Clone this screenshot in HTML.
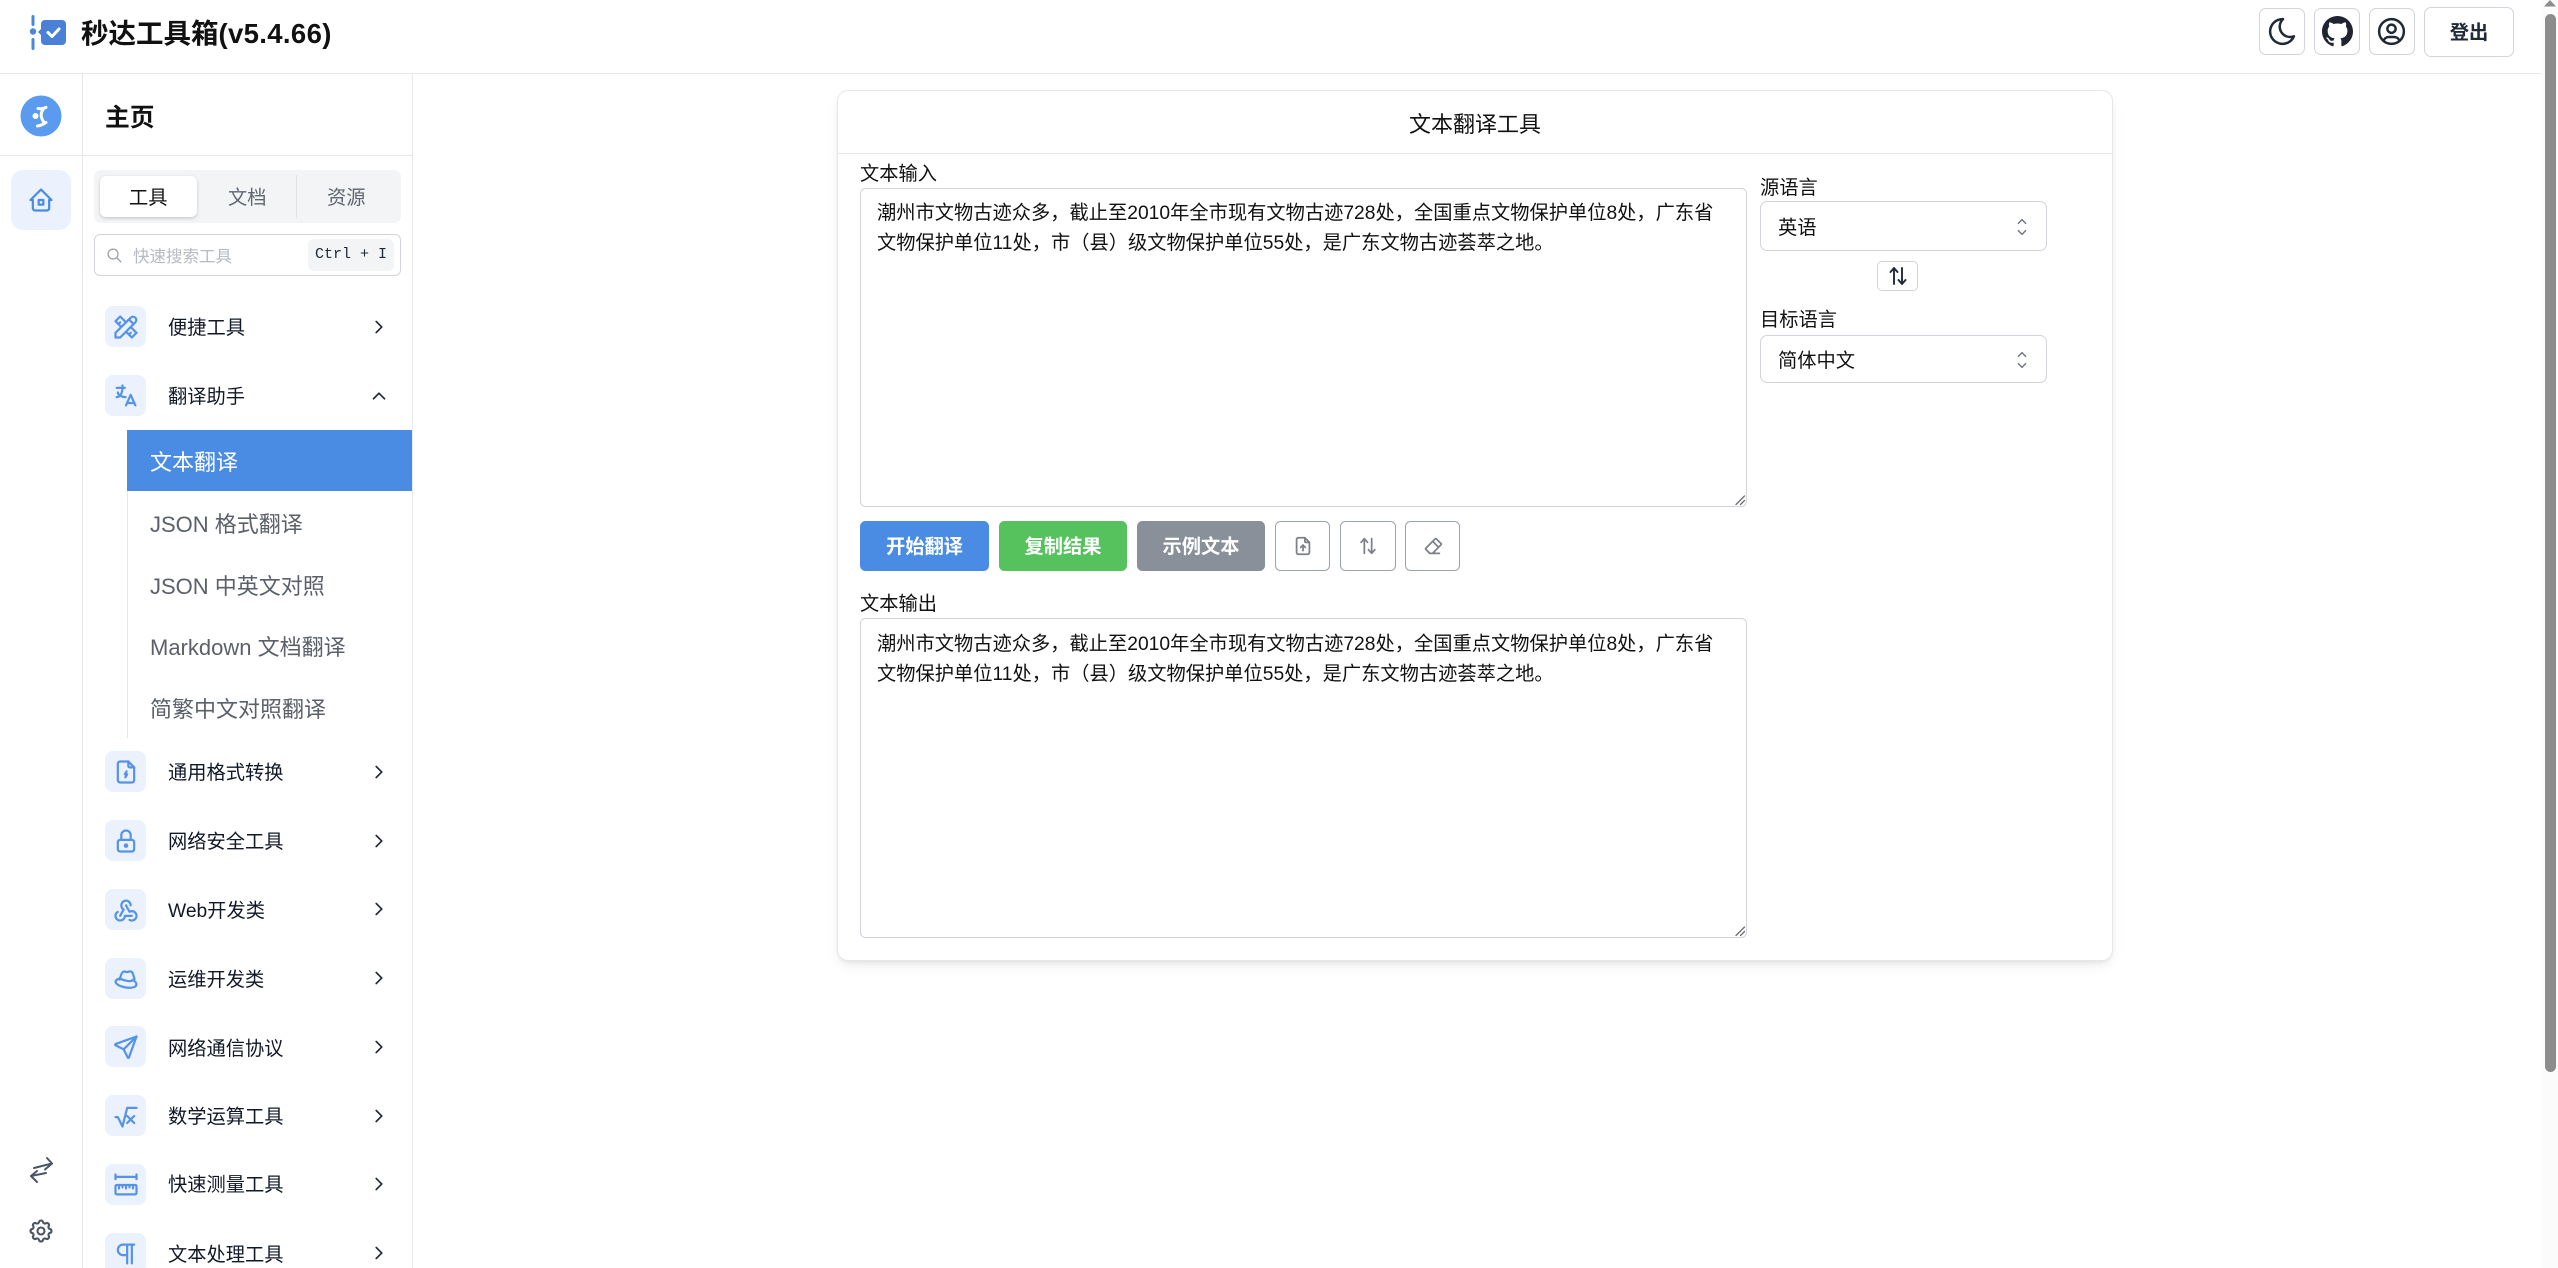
<!DOCTYPE html>
<html lang="zh-CN"><head><meta charset="utf-8"><title>秒达工具箱</title>
<style>
*{box-sizing:border-box;margin:0;padding:0}
html,body{width:2558px;height:1268px;overflow:hidden;background:#fff}
body{position:relative;font-family:"Liberation Sans","Noto Sans CJK SC",sans-serif;color:#111827;font-size:19.25px}
.a{position:absolute}
.t{position:absolute;white-space:pre;line-height:30px;margin-top:2px}
.ln{position:absolute;background:#e5e7eb}
svg{position:absolute;fill:none;stroke-linecap:round;stroke-linejoin:round}
.ic{width:28px;height:28px;stroke:#5693e7;stroke-width:1.9}
.box{position:absolute;left:105px;width:41px;height:41px;background:#ebf2fd;border-radius:8px}
.box svg{left:6.5px;top:6.5px}
.chev{left:368px;width:22px;height:22px;stroke:#1f2937;stroke-width:1.8}
.btn{position:absolute;top:521px;height:50px;border-radius:5.5px;color:#fff;font-weight:700;text-align:center;line-height:53px}
.ob{position:absolute;top:521px;height:50px;border:1.4px solid #9ca3af;border-radius:5.5px;background:#fff}
.ob svg{width:22px;height:22px;stroke:#7b8089;stroke-width:1.9;left:16px;top:13px}
.hb{position:absolute;top:8px;width:46px;height:47px;border:1.4px solid #d1d5db;border-radius:7px;background:#fff}
.hb svg{stroke:#1f2937;stroke-width:1.8;width:33px;height:33px;left:5.5px;top:6px}
.ta{position:absolute;left:860px;width:887px;border:1.4px solid #d1d5db;border-radius:5.5px;background:#fff}
.sel{position:absolute;left:1760px;width:287px;border:1.4px solid #d1d5db;border-radius:7px;background:#fff}
.sub{position:absolute;left:150px;font-size:22px;line-height:30px;color:#5b606a;white-space:pre;margin-top:2px}
</style></head><body>

<!-- header -->
<svg style="left:20px;top:8px;width:60px;height:50px" viewBox="0 0 60 50">
<path d="M13 8.5v8M13 31.5v9" stroke="#4a86dc" stroke-width="3"/>
<circle cx="13" cy="23.5" r="3.2" fill="#4a86dc"/>
<path d="M25 12h17a4 4 0 0 1 4 4v17a4 4 0 0 1-4 4H25a4 4 0 0 1-4-4v-6l-3-3 3-3v-5a4 4 0 0 1 4-4z" fill="#4a80d6"/>
<path d="M28 24.5l4 4 7-7.5" stroke="#fff" stroke-width="3"/>
</svg>
<div class="t" style="left:81px;top:17px;font-size:27.5px;font-weight:700;color:#111">秒达工具箱<span style="letter-spacing:.35px">(v5.4.66)</span></div>

<div class="hb" style="left:2259px"><svg viewBox="0 0 24 24"><path d="M12 3c.132 0 .263 0 .393 0a7.5 7.5 0 0 0 7.92 12.446a9 9 0 1 1 -8.313 -12.454z"/></svg></div>
<div class="hb" style="left:2314px"><svg viewBox="0 0 16 16" style="fill:#1f2430;stroke:none;width:31px;height:31px;left:6.5px;top:7px"><path d="M8 0C3.58 0 0 3.58 0 8c0 3.54 2.29 6.53 5.47 7.59.4.07.55-.17.55-.38 0-.19-.01-.82-.01-1.49-2.01.37-2.53-.49-2.69-.94-.09-.23-.48-.94-.82-1.13-.28-.15-.68-.52-.01-.53.63-.01 1.08.58 1.23.82.72 1.21 1.87.87 2.33.66.07-.52.28-.87.51-1.07-1.78-.2-3.64-.89-3.64-3.95 0-.87.31-1.59.82-2.15-.08-.2-.36-1.02.08-2.12 0 0 .67-.21 2.2.82.64-.18 1.32-.27 2-.27.68 0 1.36.09 2 .27 1.53-1.04 2.2-.82 2.2-.82.44 1.1.16 1.92.08 2.12.51.56.82 1.27.82 2.15 0 3.07-1.87 3.75-3.65 3.95.29.25.54.73.54 1.48 0 1.07-.01 1.93-.01 2.2 0 .21.15.46.55.38A8.013 8.013 0 0016 8c0-4.42-3.58-8-8-8z"/></svg></div>
<div class="hb" style="left:2369px"><svg viewBox="0 0 24 24" style="left:4.5px"><circle cx="12" cy="12" r="9"/><circle cx="12" cy="10" r="3"/><path d="M6.168 18.849a4 4 0 0 1 3.832 -2.849h4a4 4 0 0 1 3.834 2.855"/></svg></div>
<div class="a" style="left:2424px;top:7px;width:90px;height:50px;border:1.4px solid #d1d5db;border-radius:7px;text-align:center;line-height:51px;font-weight:700;color:#1f2937">登出</div>

<div class="ln" style="left:0;top:73px;width:2541px;height:1.4px"></div>
<div class="ln" style="left:82px;top:73px;width:1.4px;height:1195px"></div>
<div class="ln" style="left:412px;top:73px;width:1.4px;height:1195px"></div>
<div class="ln" style="left:0;top:155px;width:412px;height:1.4px"></div>

<!-- rail -->
<svg style="left:20px;top:95px;width:42px;height:42px" viewBox="0 0 42 42">
<circle cx="21" cy="21" r="20.5" fill="#5a9bef"/>
<circle cx="15.500" cy="21" r="3" fill="#fff"/>
<path d="M18 13.500c3 .5 5.500 .2 8-1.200M24 13.500c-2.500 2.500-3 5-2.800 7.500c.2 2.500 1.500 4.500 2.800 6.500M17.500 31c3-.5 6-1.800 8.500-3.500" stroke="#fff" stroke-width="3"/>
</svg>
<div class="a" style="left:11px;top:170px;width:60px;height:60px;background:#ebf2fd;border-radius:12px"></div>
<svg class="ic" style="left:27px;top:186px;stroke:#4a8ce4" viewBox="0 0 24 24"><path d="M5 12l-2 0l9 -9l9 9l-2 0"/><path d="M5 12v7a2 2 0 0 0 2 2h10a2 2 0 0 0 2 -2v-7"/><path d="M10 12h4v4h-4z"/></svg>
<svg style="left:27px;top:1156px;width:28px;height:28px;stroke:#4b5563;stroke-width:2" viewBox="0 0 28 28"><path d="M20 2l5 5.500-7 6"/><path d="M7 12L25 7.500"/><path d="M10 15l-6 5 6 6"/><path d="M4 20l15-3"/></svg>
<svg style="left:27px;top:1217px;width:28px;height:28px;stroke:#4b5563;stroke-width:1.8" viewBox="0 0 24 24"><path d="M10.325 4.317c.426 -1.756 2.924 -1.756 3.35 0a1.724 1.724 0 0 0 2.573 1.066c1.543 -.94 3.31 .826 2.37 2.37a1.724 1.724 0 0 0 1.065 2.572c1.756 .426 1.756 2.924 0 3.35a1.724 1.724 0 0 0 -1.066 2.573c.94 1.543 -.826 3.31 -2.37 2.37a1.724 1.724 0 0 0 -2.572 1.065c-.426 1.756 -2.924 1.756 -3.35 0a1.724 1.724 0 0 0 -2.573 -1.066c-1.543 .94 -3.31 -.826 -2.37 -2.37a1.724 1.724 0 0 0 -1.065 -2.572c-1.756 -.426 -1.756 -2.924 0 -3.35a1.724 1.724 0 0 0 1.066 -2.573c-.94 -1.543 .826 -3.31 2.37 -2.37c1 .608 2.296 .07 2.572 -1.065z"/><circle cx="12" cy="12" r="3"/></svg>

<!-- sidebar head -->
<div class="t" style="left:105px;top:102px;font-size:24.75px;font-weight:700;color:#111">主页</div>
<div class="a" style="left:94px;top:170px;width:307px;height:53px;background:#f3f4f6;border-radius:7px"></div>
<div class="a" style="left:100px;top:176px;width:97px;height:41px;background:#fff;border-radius:6px;box-shadow:0 1.4px 3px rgba(0,0,0,.18)"></div>
<div class="ln" style="left:296px;top:175px;width:1.4px;height:43px;background:#e0e2e6"></div>
<div class="t" style="left:129px;top:182px;color:#111">工具</div>
<div class="t" style="left:228px;top:182px;color:#5f6570">文档</div>
<div class="t" style="left:327px;top:182px;color:#5f6570">资源</div>
<div class="a" style="left:94px;top:234px;width:307px;height:42px;border:1.4px solid #d1d5db;border-radius:6px"></div>
<svg style="left:106px;top:247px;width:17px;height:17px;stroke:#9aa0a8;stroke-width:1.8" viewBox="0 0 24 24"><circle cx="10" cy="10" r="7"/><path d="M21 21l-6 -6"/></svg>
<div class="t" style="left:133px;top:240px;font-size:16.5px;color:#b6bac1">快速搜索工具</div>
<div class="a" style="left:308px;top:239px;width:86px;height:32px;background:#f3f4f6;border-radius:6px"></div>
<div class="t" style="left:315px;top:238px;font-family:'Liberation Mono',monospace;font-size:15px;color:#1f2937">Ctrl + I</div>

<!-- items -->
<div class="box" style="top:306px"><svg class="ic" viewBox="0 0 24 24"><path d="M3 21h4l13 -13a1.5 1.5 0 0 0 -4 -4l-13 13v4"/><path d="M14.5 5.5l4 4"/><path d="M12 8l-5 -5l-4 4l5 5"/><path d="M7 8l-1.5 1.5"/><path d="M16 12l5 5l-4 4l-5 -5"/><path d="M16 17l-1.5 1.5"/></svg></div>
<div class="t" style="left:168px;top:312px">便捷工具</div>
<svg class="chev" style="top:316px" viewBox="0 0 24 24"><path d="M9 6l6 6l-6 6"/></svg>

<div class="box" style="top:375px"><svg class="ic" viewBox="0 0 24 24"><path d="M4 5h7"/><path d="M9 3v2c0 4.418 -2.239 8 -5 8"/><path d="M5 9c0 2.144 2.952 3.908 6.7 4"/><path d="M12 20l4 -9l4 9"/><path d="M19.1 18h-6.2"/></svg></div>
<div class="t" style="left:168px;top:381px">翻译助手</div>
<svg class="chev" style="top:385px" viewBox="0 0 24 24"><path d="M6 15l6 -6l6 6"/></svg>

<div class="ln" style="left:127px;top:430px;width:1.4px;height:308px"></div>
<div class="a" style="left:127px;top:430px;width:285px;height:61px;background:#4a8ce4"></div>
<div class="sub" style="top:446px;color:#fff">文本翻译</div>
<div class="sub" style="top:508px">JSON 格式翻译</div>
<div class="sub" style="top:570px">JSON 中英文对照</div>
<div class="sub" style="top:631px">Markdown 文档翻译</div>
<div class="sub" style="top:693px">简繁中文对照翻译</div>

<div class="box" style="top:751px"><svg class="ic" viewBox="0 0 24 24"><path d="M14 3v4a1 1 0 0 0 1 1h4"/><path d="M17 21h-10a2 2 0 0 1 -2 -2v-14a2 2 0 0 1 2 -2h7l5 5v11a2 2 0 0 1 -2 2"/><path d="M12.5 11.5l-1.5 2.5h2l-1.5 2.5"/></svg></div>
<div class="t" style="left:168px;top:757px">通用格式转换</div>
<svg class="chev" style="top:761px" viewBox="0 0 24 24"><path d="M9 6l6 6l-6 6"/></svg>

<div class="box" style="top:820px"><svg class="ic" viewBox="0 0 24 24"><path d="M5 13a2 2 0 0 1 2 -2h10a2 2 0 0 1 2 2v6a2 2 0 0 1 -2 2h-10a2 2 0 0 1 -2 -2v-6z"/><circle cx="12" cy="16" r="1"/><path d="M8 11v-4a4 4 0 1 1 8 0v4"/></svg></div>
<div class="t" style="left:168px;top:826px">网络安全工具</div>
<svg class="chev" style="top:830px" viewBox="0 0 24 24"><path d="M9 6l6 6l-6 6"/></svg>

<div class="box" style="top:889px"><svg class="ic" viewBox="0 0 24 24"><path d="M4.876 13.61a4 4 0 1 0 6.124 3.39h6"/><path d="M15.066 20.502a4 4 0 1 0 1.934 -7.502c-.706 0 -1.424 .179 -2 .5l-3 -5.5"/><path d="M16 8a4 4 0 1 0 -8 0c0 1.506 .77 2.818 2 3.5l-3 5.5"/></svg></div>
<div class="t" style="left:168px;top:895px">Web开发类</div>
<svg class="chev" style="top:898px" viewBox="0 0 24 24"><path d="M9 6l6 6l-6 6"/></svg>

<div class="box" style="top:958px"><svg class="ic" viewBox="0 0 24 24"><path d="M6.5 12.5l1.5-4.500c.6-2 2-2.800 3.800-2.200c1 .3 1.800 .3 2.700-.1c1.700-.6 3 .2 3.500 2l1.300 4.300"/><path d="M6.500 11.500c-2.500 .8-4 2-3.200 3.600c1.300 2.600 7 4.400 11.700 4.400c4 0 6.500-1.300 5.800-3.600c-.4-1.300-1.600-2.400-3.200-3.200c-.3 2-6 1.300-11.100-1.200z"/></svg></div>
<div class="t" style="left:168px;top:964px">运维开发类</div>
<svg class="chev" style="top:967px" viewBox="0 0 24 24"><path d="M9 6l6 6l-6 6"/></svg>

<div class="box" style="top:1026px"><svg class="ic" viewBox="0 0 24 24"><path d="M10 14l11 -11"/><path d="M21 3l-6.5 18a.55 .55 0 0 1 -1 0l-3.5 -7l-7 -3.5a.55 .55 0 0 1 0 -1l18 -6.5"/></svg></div>
<div class="t" style="left:168px;top:1033px">网络通信协议</div>
<svg class="chev" style="top:1036px" viewBox="0 0 24 24"><path d="M9 6l6 6l-6 6"/></svg>

<div class="box" style="top:1095px"><svg class="ic" viewBox="0 0 24 24"><path d="M13 12l6 6"/><path d="M13 18l6 -6"/><path d="M3 13h2l4 8l4 -16h8"/></svg></div>
<div class="t" style="left:168px;top:1101px">数学运算工具</div>
<svg class="chev" style="top:1105px" viewBox="0 0 24 24"><path d="M9 6l6 6l-6 6"/></svg>

<div class="box" style="top:1164px"><svg class="ic" viewBox="0 0 24 24"><path d="M19.875 12c.621 0 1.125 .512 1.125 1.143v5.714c0 .631 -.504 1.143 -1.125 1.143h-15.875a1 1 0 0 1 -1 -1v-5.857c0 -.631 .504 -1.143 1.125 -1.143h15.75z"/><path d="M9 12v2"/><path d="M6 12v3"/><path d="M12 12v3"/><path d="M18 12v3"/><path d="M15 12v2"/><path d="M3 3v4"/><path d="M3 5h18"/><path d="M21 3v4"/></svg></div>
<div class="t" style="left:168px;top:1169px">快速测量工具</div>
<svg class="chev" style="top:1173px" viewBox="0 0 24 24"><path d="M9 6l6 6l-6 6"/></svg>

<div class="box" style="top:1233px"><svg class="ic" viewBox="0 0 24 24"><path d="M13 4v16"/><path d="M17 4v16"/><path d="M19 4h-9.5a4.5 4.5 0 0 0 0 9h3.5"/></svg></div>
<div class="t" style="left:168px;top:1239px">文本处理工具</div>
<svg class="chev" style="top:1242px" viewBox="0 0 24 24"><path d="M9 6l6 6l-6 6"/></svg>

<!-- card -->
<div class="a" style="left:837px;top:90px;width:1276px;height:871px;background:#fff;border:1.4px solid #e5e7eb;border-radius:11px;box-shadow:0 6px 14px -3px rgba(0,0,0,.09),0 3px 5px -2px rgba(0,0,0,.07)"></div>
<div class="ln" style="left:838px;top:153px;width:1274px;height:1.4px"></div>
<div class="t" style="left:1409px;top:108px;font-size:22px;color:#111">文本翻译工具</div>

<div class="t" style="left:860px;top:158px;color:#111">文本输入</div>
<div class="ta" style="top:188px;height:319px"></div>
<div class="t" style="left:877px;top:197px;color:#111">潮州市文物古迹众多，截止至2010年全市现有文物古迹728处，全国重点文物保护单位8处，广东省</div>
<div class="t" style="left:877px;top:227px;color:#111">文物保护单位11处，市（县）级文物保护单位55处，是广东文物古迹荟萃之地。</div>
<svg style="left:1735px;top:495px;width:11px;height:11px;stroke:#6b6b6b;stroke-width:1.3" viewBox="0 0 11 11"><path d="M1 9.5L9.5 1M5.5 9.5L9.5 5.5"/></svg>

<div class="btn" style="left:860px;width:129px;background:#4a8ce4">开始翻译</div>
<div class="btn" style="left:999px;width:128px;background:#56c25e">复制结果</div>
<div class="btn" style="left:1137px;width:128px;background:#8a9099">示例文本</div>
<div class="ob" style="left:1275px;width:55px"><svg viewBox="0 0 24 24"><path d="M14 3v4a1 1 0 0 0 1 1h4"/><path d="M17 21h-10a2 2 0 0 1 -2 -2v-14a2 2 0 0 1 2 -2h7l5 5v11a2 2 0 0 1 -2 2"/><path d="M12 11v6"/><path d="M9.5 13.5l2.5 -2.5l2.5 2.5"/></svg></div>
<div class="ob" style="left:1340px;width:56px"><svg viewBox="0 0 24 24"><path d="M8 20V4M4.5 8L8 4l3.5 4"/><path d="M16 4v16M12.5 16l3.5 4 3.500-4"/></svg></div>
<div class="ob" style="left:1405px;width:55px"><svg viewBox="0 0 24 24"><path d="M19 20h-10.5l-4.21 -4.3a1 1 0 0 1 0 -1.41l10 -10a1 1 0 0 1 1.41 0l5 5a1 1 0 0 1 0 1.41l-9.2 9.3"/><path d="M18 13.3l-6.3 -6.3"/></svg></div>

<div class="t" style="left:860px;top:588px;color:#111">文本输出</div>
<div class="ta" style="top:618px;height:320px"></div>
<div class="t" style="left:877px;top:628px;color:#111">潮州市文物古迹众多，截止至2010年全市现有文物古迹728处，全国重点文物保护单位8处，广东省</div>
<div class="t" style="left:877px;top:658px;color:#111">文物保护单位11处，市（县）级文物保护单位55处，是广东文物古迹荟萃之地。</div>
<svg style="left:1735px;top:926px;width:11px;height:11px;stroke:#6b6b6b;stroke-width:1.3" viewBox="0 0 11 11"><path d="M1 9.5L9.5 1M5.5 9.5L9.5 5.5"/></svg>

<div class="t" style="left:1760px;top:172px;color:#111">源语言</div>
<div class="sel" style="top:201px;height:50px"></div>
<div class="t" style="left:1778px;top:212px;color:#111">英语</div>
<svg style="left:2011px;top:216px;width:22px;height:22px;stroke:#6b7280;stroke-width:1.5" viewBox="0 0 24 24"><path d="M8 8l4 -4l4 4"/><path d="M16 16l-4 4l-4 -4"/></svg>
<div class="a" style="left:1877px;top:261px;width:41px;height:30px;border:1.4px solid #d1d5db;border-radius:5px"></div>
<svg style="left:1886px;top:264px;width:24px;height:24px;stroke:#1f2937;stroke-width:1.9" viewBox="0 0 24 24"><path d="M8 20V4M4.5 8L8 4l3.5 4"/><path d="M16 4v16M12.5 16l3.5 4 3.5-4"/></svg>
<div class="t" style="left:1760px;top:304px;color:#111">目标语言</div>
<div class="sel" style="top:335px;height:48px"></div>
<div class="t" style="left:1778px;top:345px;color:#111">简体中文</div>
<svg style="left:2011px;top:349px;width:22px;height:22px;stroke:#6b7280;stroke-width:1.5" viewBox="0 0 24 24"><path d="M8 8l4 -4l4 4"/><path d="M16 16l-4 4l-4 -4"/></svg>

<!-- scrollbar -->
<div class="a" style="left:2541px;top:0;width:17px;height:1268px;background:#fbfbfb"></div>
<div class="a" style="left:2545px;top:14px;width:11px;height:1058px;background:#8c8c8c;border-radius:6px"></div>
<svg style="left:2544px;top:0;width:12px;height:7px;fill:#8c8c8c" viewBox="0 0 12 7"><path d="M6 0L12 6.5H0z"/></svg>
</body></html>
